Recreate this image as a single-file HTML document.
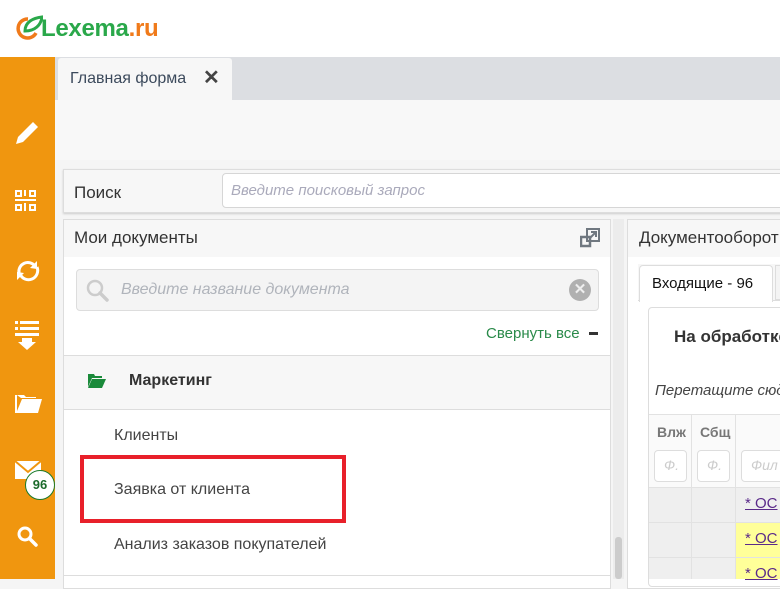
<!DOCTYPE html>
<html><head><meta charset="utf-8"><style>
*{box-sizing:border-box;margin:0;padding:0}
body{width:780px;height:579px;overflow:hidden;position:relative;background:#f5f5f5;font-family:"Liberation Sans","Noto Sans CJK SC",sans-serif;color:#333}
.a{position:absolute}
.t{position:absolute;white-space:nowrap;line-height:1}
</style></head><body>
<div class="a" style="left:0;top:0;width:780px;height:57px;background:#fff"></div>
<!-- logo -->
<svg class="a" style="left:13px;top:13px" width="30" height="30" viewBox="0 0 30 30">
<path d="M15 6 A9.5 9.5 0 1 0 23 20" fill="none" stroke="#f07a1a" stroke-width="3.5"/>
<path d="M12 18 C12 9 20 5 29 4 C28 12 22 18 12 18 Z" fill="none" stroke="#2aa84a" stroke-width="3"/>
</svg>
<div class="t" style="left:41px;top:17px;font-size:24px;font-weight:bold;color:#2aa84a;letter-spacing:-0.3px">Lexema<span style="color:#f07a1a">.ru</span></div>
<!-- sidebar -->
<div class="a" style="left:0;top:57px;width:55px;height:522px;background:#f0960f"></div>
<svg class="a" style="left:0;top:57px" width="55" height="522" viewBox="0 0 55 522" fill="#fff">
<path d="M16 87 L18 80 L33 65 L38 70 L23 85 Z"/>
<g><rect x="16" y="134" width="5" height="5" fill="none" stroke="#fff" stroke-width="2"/><rect x="30" y="134" width="5" height="5" fill="none" stroke="#fff" stroke-width="2"/><rect x="16" y="148" width="5" height="5" fill="none" stroke="#fff" stroke-width="2"/><rect x="30" y="148" width="5" height="5" fill="none" stroke="#fff" stroke-width="2"/><rect x="24" y="133" width="2" height="6"/><rect x="15" y="142" width="21" height="2"/><rect x="24" y="146" width="2" height="8"/></g>
<path d="M19 216 A9 9 0 0 1 35 209" fill="none" stroke="#fff" stroke-width="3"/><path d="M37 204 L37 212 L30 211 Z"/>
<path d="M37 210 A9 9 0 0 1 20 217" fill="none" stroke="#fff" stroke-width="3"/><path d="M17 223 L17 215 L24 216 Z"/>
<rect x="15" y="264" width="3" height="3"/><rect x="20" y="264" width="19" height="3"/><rect x="15" y="270" width="3" height="3"/><rect x="20" y="270" width="19" height="3"/><rect x="15" y="276" width="24" height="3"/><path d="M22 281 L32 281 L32 285 L36 285 L27 293 L18 285 L22 285 Z"/>
<path d="M15 338 L15 356 L38 356 L42 342 L22 342 L17 354 L17 338 Z M17 338 L24 338 L26 340 L36 340 L36 341 L21 341 Z"/>
<rect x="15" y="404" width="26" height="18"/>
<path d="M15 404 L28 415 L41 404" fill="none" stroke="#f0960f" stroke-width="2"/>
<circle cx="25" cy="477" r="6" fill="none" stroke="#fff" stroke-width="3"/>
<path d="M30 482 L36 488" stroke="#fff" stroke-width="3.5" stroke-linecap="round"/>
</svg>
<div class="a" style="left:25px;top:470px;width:30px;height:30px;border-radius:50%;background:#fff;border:1.5px solid #1a7a2a"></div>
<div class="t" style="left:25px;top:478px;width:30px;text-align:center;font-size:13px;font-weight:bold;color:#1a6a2a">96</div>
<!-- tabs -->
<div class="a" style="left:55px;top:57px;width:725px;height:43px;background:#dcdee2"></div>
<div class="a" style="left:58px;top:58px;width:174px;height:42px;background:#f7f7f7;border-radius:3px 3px 0 0"></div>
<div class="t" style="left:70px;top:71px;font-size:16px;color:#3c4a5c">Главная форма</div>
<div class="t" style="left:203px;top:68px;font-size:20px;font-weight:bold;color:#444">✕</div>
<div class="a" style="left:55px;top:100px;width:725px;height:60px;background:#f8f8f8"></div>
<!-- search panel -->
<div class="a" style="left:63px;top:169px;width:720px;height:44px;background:#f7f7f7;border:1px solid #ddd;box-shadow:0 1px 2px #ccc"></div>
<div class="t" style="left:74px;top:184px;font-size:17px;color:#333">Поиск</div>
<div class="a" style="left:222px;top:173px;width:570px;height:35px;background:#fff;border:1px solid #d6d6d6;border-radius:4px"></div>
<div class="t" style="left:231px;top:183px;font-size:15px;font-style:italic;color:#aab">Введите поисковый запрос</div>
<!-- left panel -->
<div class="a" style="left:63px;top:219px;width:548px;height:370px;background:#fff;border:1px solid #ddd"></div>
<div class="a" style="left:64px;top:220px;width:546px;height:37px;background:#f7f7f7"></div>
<div class="t" style="left:74px;top:229px;font-size:17px;color:#333">Мои документы</div>
<svg class="a" style="left:580px;top:228px" width="20" height="20" viewBox="0 0 20 20"><rect x="7" y="1" width="12" height="12" fill="none" stroke="#707880" stroke-width="2"/><rect x="1" y="9" width="9" height="9" fill="none" stroke="#707880" stroke-width="2.5"/><path d="M10 10 L16 4 M11 4 L16 4 L16 9" stroke="#707880" stroke-width="2" fill="none"/></svg>
<div class="a" style="left:76px;top:269px;width:523px;height:42px;background:#f4f4f4;border:1px solid #ddd;border-radius:4px"></div>
<svg class="a" style="left:85px;top:278px" width="26" height="26" viewBox="0 0 26 26"><circle cx="10" cy="10" r="7" fill="none" stroke="#ccc" stroke-width="2.5"/><path d="M15 15 L22 22" stroke="#ccc" stroke-width="3.5" stroke-linecap="round"/></svg>
<div class="t" style="left:121px;top:282px;font-size:16px;font-style:italic;color:#b0b4bb">Введите название документа</div>
<div class="a" style="left:569px;top:279px;width:22px;height:22px;border-radius:50%;background:#b0b0b0"></div>
<div class="t" style="left:569px;top:282px;width:22px;text-align:center;font-size:15px;font-weight:bold;color:#eee">✕</div>
<div class="t" style="left:486px;top:326px;font-size:15px;color:#2a8a4a">Свернуть все</div>
<div class="a" style="left:589px;top:332px;width:9px;height:3px;background:#333"></div>
<div class="a" style="left:64px;top:355px;width:546px;height:55px;background:#f7f7f7;border-top:1px solid #ddd;border-bottom:1px solid #ddd"></div>
<svg class="a" style="left:88px;top:374px" width="18" height="14" viewBox="0 0 18 14"><path d="M0 0 L6 0 L7 2 L14 2 L14 4 L4 4 L0 13 Z" fill="#1a8a3a"/><path d="M4 5 L18 5 L14 14 L0 14 Z" fill="#1a8a3a"/></svg>
<div class="t" style="left:129px;top:373px;font-size:16px;font-weight:bold;color:#333">Маркетинг</div>
<div class="t" style="left:114px;top:428px;font-size:16px;color:#444">Клиенты</div>
<div class="t" style="left:114px;top:482px;font-size:16px;color:#444">Заявка от клиента</div>
<div class="t" style="left:114px;top:537px;font-size:16px;color:#444">Анализ заказов покупателей</div>
<div class="a" style="left:64px;top:575px;width:546px;height:1px;background:#ddd"></div>
<div class="a" style="left:80px;top:455px;width:266px;height:68px;border:4px solid #e8202a"></div>
<!-- scrollbar -->
<div class="a" style="left:613px;top:219px;width:11px;height:360px;background:#ececec"></div>
<div class="a" style="left:615px;top:537px;width:7px;height:42px;background:#ccc;border-radius:3px"></div>
<!-- right panel -->
<div class="a" style="left:627px;top:219px;width:160px;height:370px;background:#fff;border:1px solid #ddd"></div>
<div class="a" style="left:628px;top:220px;width:160px;height:37px;background:#f7f7f7"></div>
<div class="t" style="left:639px;top:229px;font-size:17px;color:#333">Документооборот</div>
<div class="a" style="left:638px;top:264px;width:150px;height:37px;background:#f7f7f7;border-bottom:1px solid #ddd"></div>
<div class="a" style="left:639px;top:265px;width:134px;height:37px;background:#fff;border:1px solid #ddd;border-bottom:none;border-radius:4px 4px 0 0"></div>
<div class="a" style="left:775px;top:265px;width:20px;height:35px;border:1px solid #ddd;background:#f4f4f4"></div>
<div class="t" style="left:652px;top:276px;font-size:15px;color:#111">Входящие - 96</div>
<div class="a" style="left:648px;top:307px;width:140px;height:280px;background:#fff;border:1px solid #ddd;border-radius:4px"></div>
<div class="t" style="left:674px;top:328px;font-size:17px;font-weight:bold;color:#333">На обработке</div>
<div class="t" style="left:655px;top:383px;font-size:15px;font-style:italic;color:#444">Перетащите сюда</div>
<div class="a" style="left:649px;top:414px;width:140px;height:1px;background:#e2e2e2"></div>
<div class="a" style="left:649px;top:415px;width:140px;height:72px;background:#fafafa"></div>
<div class="a" style="left:691px;top:415px;width:1px;height:164px;background:#e2e2e2"></div>
<div class="a" style="left:735px;top:415px;width:1px;height:164px;background:#e2e2e2"></div>
<div class="t" style="left:657px;top:425px;font-size:14px;font-weight:bold;color:#777">Влж</div>
<div class="t" style="left:700px;top:425px;font-size:14px;font-weight:bold;color:#777;width:35px;overflow:hidden">Сбщ</div>
<div class="a" style="left:654px;top:450px;width:33px;height:32px;border:1px solid #ddd;border-radius:4px;background:#fff"></div>
<div class="a" style="left:697px;top:450px;width:33px;height:32px;border:1px solid #ddd;border-radius:4px;background:#fff"></div>
<div class="a" style="left:741px;top:450px;width:50px;height:32px;border:1px solid #ddd;border-radius:4px;background:#fff"></div>
<div class="t" style="left:664px;top:458px;font-size:14px;font-style:italic;color:#ccc">Ф.</div>
<div class="t" style="left:707px;top:458px;font-size:14px;font-style:italic;color:#ccc">Ф.</div>
<div class="t" style="left:751px;top:458px;font-size:14px;font-style:italic;color:#ccc">Фил</div>
<div class="a" style="left:649px;top:487px;width:140px;height:92px;background:#efefef;border-top:1px solid #e2e2e2"></div>
<div class="a" style="left:736px;top:522px;width:50px;height:57px;background:#ffff99"></div>
<div class="a" style="left:649px;top:522px;width:140px;height:1px;background:#e2e2e2"></div>
<div class="a" style="left:649px;top:557px;width:140px;height:1px;background:#e2e2e2"></div>
<div class="a" style="left:691px;top:487px;width:1px;height:92px;background:#e2e2e2"></div>
<div class="a" style="left:735px;top:487px;width:1px;height:92px;background:#e2e2e2"></div>
<div class="t" style="left:745px;top:496px;font-size:15px;color:#5a2a8a;text-decoration:underline">* ОС</div>
<div class="t" style="left:745px;top:531px;font-size:15px;color:#5a2a8a;text-decoration:underline">* ОС</div>
<div class="t" style="left:745px;top:566px;font-size:15px;color:#5a2a8a;text-decoration:underline">* ОС</div>
</body></html>
